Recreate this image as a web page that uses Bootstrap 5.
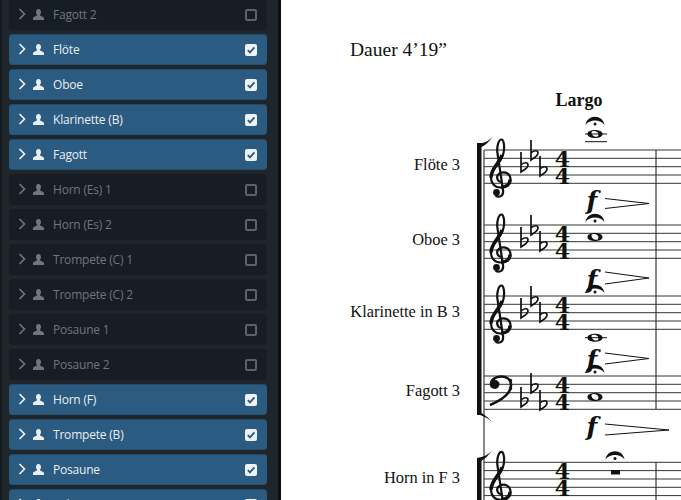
<!DOCTYPE html>
<html lang="en">
<head>
    <title>Score parts</title>
    <meta name="viewport" content="width=device-width, initial-scale=1">
    <link href="https://cdn.jsdelivr.net/npm/bootstrap@5.3.0/dist/css/bootstrap.min.css" rel="stylesheet">
    <script src="https://cdn.jsdelivr.net/npm/bootstrap@5.3.0/dist/js/bootstrap.bundle.min.js"></script>
    <style>
        html, body { height: 500px; overflow: hidden; background: #fff; }
        .part-panel {
            width: 281px;
            height: 500px;
            padding: 0 11px 0 7px;
            background: #1f262b;
            border-left: 2px solid #14181b;
            border-right: 3px solid #0c0e10;
            overflow: hidden;
        }
        .part-list { margin-top: -1px; gap: 4px; }
        .part-row {
            height: 31px;
            flex: none;
            padding: 0 10px 0 9px;
            border-radius: 4px;
            background: #171d24;
            color: #71767a;
            font: 12px/1 "Open Sans", sans-serif;
        }
        .part-row.is-on {
            background: #2b5b80;
            color: #e9eef2;
            box-shadow: 0 1px 0 #214a69 inset, 0 -1px 0 #25506f inset;
        }
        .part-chev { width: 8px; height: 12px; margin-right: 7px; margin-top: -1px; stroke: currentColor; fill: none; stroke-width: 1.7; }
        .part-user { width: 11px; height: 11px; margin-right: 9px; fill: currentColor; }
        .part-name { flex: 1; letter-spacing: -.2px; padding-top: 1px; }
        .part-box {
            width: 12px;
            height: 12px;
            border-radius: 2px;
            border: 2px solid #5c6269;
        }
        .is-on .part-box { background: #eef2f6; border-color: #eef2f6; }
        .part-box svg { display: none; width: 10px; height: 10px; margin: -1px; fill: none; stroke: #2b5b80; stroke-width: 1.8; }
        .is-on .part-box svg { display: block; }
        .score-sheet { width: 400px; height: 500px; flex: none; }
        .score-sheet text { font-family: "Liberation Serif", serif; fill: #111; }
        .score-sheet .score-name { font-size: 16.4px; text-anchor: end; }
        .score-staff line { stroke: #333; stroke-width: 1; }
        .score-sheet .score-time { font-family: "DejaVu Serif", serif; font-size: 22px; font-weight: 700; text-anchor: middle; }
        .score-sheet .score-dyn { font-family: "DejaVu Serif", serif; font-size: 25px; font-weight: 700; font-style: italic; text-anchor: middle; }
        .score-hair { fill: none; stroke: #111; stroke-width: 1; }
    </style>
</head>
<body class="d-flex">

    <svg width="0" height="0" class="position-absolute">
        <defs>
            <symbol id="chev" viewBox="0 0 8 12"><path d="M1.5 1 L6.5 6 L1.5 11"/></symbol>
            <symbol id="user" viewBox="0 0 11 11"><path d="M5.5 0C7.3 0 8 1.5 8 3C8 4.5 7.2 5.3 6.9 6C7 7 10.5 7.5 11 9V11H0V9C.5 7.5 4 7 4.1 6C3.8 5.3 3 4.5 3 3C3 1.5 3.7 0 5.5 0Z"/></symbol>
            <symbol id="tick" viewBox="0 0 10 10"><path d="M1.8 5.2 L4 7.4 L8.4 2.4"/></symbol>
        </defs>
    </svg>

    <div class="part-panel flex-shrink-0">
        <div class="part-list d-flex flex-column">
            <div class="part-row d-flex align-items-center"><svg class="part-chev"><use href="#chev"/></svg><svg class="part-user"><use href="#user"/></svg><span class="part-name">Fagott 2</span><span class="part-box"><svg><use href="#tick"/></svg></span></div>
            <div class="part-row is-on d-flex align-items-center"><svg class="part-chev"><use href="#chev"/></svg><svg class="part-user"><use href="#user"/></svg><span class="part-name">Flöte</span><span class="part-box"><svg><use href="#tick"/></svg></span></div>
            <div class="part-row is-on d-flex align-items-center"><svg class="part-chev"><use href="#chev"/></svg><svg class="part-user"><use href="#user"/></svg><span class="part-name">Oboe</span><span class="part-box"><svg><use href="#tick"/></svg></span></div>
            <div class="part-row is-on d-flex align-items-center"><svg class="part-chev"><use href="#chev"/></svg><svg class="part-user"><use href="#user"/></svg><span class="part-name">Klarinette (B)</span><span class="part-box"><svg><use href="#tick"/></svg></span></div>
            <div class="part-row is-on d-flex align-items-center"><svg class="part-chev"><use href="#chev"/></svg><svg class="part-user"><use href="#user"/></svg><span class="part-name">Fagott</span><span class="part-box"><svg><use href="#tick"/></svg></span></div>
            <div class="part-row d-flex align-items-center"><svg class="part-chev"><use href="#chev"/></svg><svg class="part-user"><use href="#user"/></svg><span class="part-name">Horn (Es) 1</span><span class="part-box"><svg><use href="#tick"/></svg></span></div>
            <div class="part-row d-flex align-items-center"><svg class="part-chev"><use href="#chev"/></svg><svg class="part-user"><use href="#user"/></svg><span class="part-name">Horn (Es) 2</span><span class="part-box"><svg><use href="#tick"/></svg></span></div>
            <div class="part-row d-flex align-items-center"><svg class="part-chev"><use href="#chev"/></svg><svg class="part-user"><use href="#user"/></svg><span class="part-name">Trompete (C) 1</span><span class="part-box"><svg><use href="#tick"/></svg></span></div>
            <div class="part-row d-flex align-items-center"><svg class="part-chev"><use href="#chev"/></svg><svg class="part-user"><use href="#user"/></svg><span class="part-name">Trompete (C) 2</span><span class="part-box"><svg><use href="#tick"/></svg></span></div>
            <div class="part-row d-flex align-items-center"><svg class="part-chev"><use href="#chev"/></svg><svg class="part-user"><use href="#user"/></svg><span class="part-name">Posaune 1</span><span class="part-box"><svg><use href="#tick"/></svg></span></div>
            <div class="part-row d-flex align-items-center"><svg class="part-chev"><use href="#chev"/></svg><svg class="part-user"><use href="#user"/></svg><span class="part-name">Posaune 2</span><span class="part-box"><svg><use href="#tick"/></svg></span></div>
            <div class="part-row is-on d-flex align-items-center"><svg class="part-chev"><use href="#chev"/></svg><svg class="part-user"><use href="#user"/></svg><span class="part-name">Horn (F)</span><span class="part-box"><svg><use href="#tick"/></svg></span></div>
            <div class="part-row is-on d-flex align-items-center"><svg class="part-chev"><use href="#chev"/></svg><svg class="part-user"><use href="#user"/></svg><span class="part-name">Trompete (B)</span><span class="part-box"><svg><use href="#tick"/></svg></span></div>
            <div class="part-row is-on d-flex align-items-center"><svg class="part-chev"><use href="#chev"/></svg><svg class="part-user"><use href="#user"/></svg><span class="part-name">Posaune</span><span class="part-box"><svg><use href="#tick"/></svg></span></div>
            <div class="part-row is-on d-flex align-items-center"><svg class="part-chev"><use href="#chev"/></svg><svg class="part-user"><use href="#user"/></svg><span class="part-name">Tuba</span><span class="part-box"><svg><use href="#tick"/></svg></span></div>
        </div>
    </div>

    <!-- score page: coordinates in the viewBox are window pixels -->
    <svg class="score-sheet" viewBox="281 0 400 500">
        <defs>
            <g id="gclef">
                <path d="M502 182C497 182 495.500 176 499.500 173.500C505 170.500 510.500 174 510.500 179.500C510.500 185 505.500 187.500 500.500 187.500C494 187.500 491 182.500 491 177.500C491 168 501 163 503.500 153C505 146 503.500 139.500 501.500 139.500C498.500 139.500 496.500 147 497.500 153.500L503 190C504 196.500 498.500 198 495.500 195.500" fill="none" stroke="#111" stroke-width="2.200"/>
                <path d="M491 177.500C491 168 500 163 502 155" fill="none" stroke="#111" stroke-width="3.600"/>
                <path d="M510 179.500C510 185 505.500 187 501 187" fill="none" stroke="#111" stroke-width="3.400"/>
                <circle cx="496.500" cy="192.500" r="3.400" fill="#111"/>
            </g>
            <g id="flat">
                <path d="M0 -20V0C3 -2 7 -4 7 -7C7 -10 3 -10 0 -7" fill="none" stroke="#111" stroke-width="1.700"/>
            </g>
            <g id="whole">
                <path fill-rule="evenodd" fill="#111" d="M-7.500 0C-7.500 -3 -3.500 -4 0 -4C3.500 -4 7.500 -3 7.500 0C7.500 3 3.500 4 0 4C-3.500 4 -7.500 3 -7.500 0ZM-3.500 -1.500C-3.500 1 -1 3 1.500 2.800C3.200 2.600 3.800 1 3.300 -.5C2.800 -2.500 .5 -3.300 -1.500 -3C-3 -2.800 -3.500 -2.500 -3.500 -1.500Z"/>
            </g>
            <g id="fermata">
                <path d="M-9.500 0C-8 -11 8 -11 9.500 0C6 -6 -6 -6 -9.500 0Z" fill="#111"/>
                <circle cx="0" cy="-1" r="1.500" fill="#111"/>
            </g>
            <g id="staff" class="score-staff">
                <line x1="484" x2="681" y1="0" y2="0"/>
                <line x1="484" x2="681" y1="8.300" y2="8.300"/>
                <line x1="484" x2="681" y1="16.700" y2="16.700"/>
                <line x1="484" x2="681" y1="25" y2="25"/>
                <line x1="484" x2="681" y1="33.300" y2="33.300"/>
            </g>
            <g id="keysig">
                <use href="#flat" x="521" y="22"/>
                <use href="#flat" x="531" y="10"/>
                <use href="#flat" x="540" y="26"/>
            </g>
        </defs>

        <text x="350" y="56" font-size="19.500">Dauer 4’19”</text>
        <text x="579" y="106" font-size="18" font-weight="700" text-anchor="middle">Largo</text>

        <text class="score-name" x="460" y="170">Flöte 3</text>
        <text class="score-name" x="460" y="245">Oboe 3</text>
        <text class="score-name" x="460" y="317">Klarinette in B 3</text>
        <text class="score-name" x="460" y="396">Fagott 3</text>
        <text class="score-name" x="460" y="483">Horn in F 3</text>

        <!-- brackets -->
        <line x1="484" x2="484" y1="150" y2="500" stroke="#111"/>
        <path d="M477 143H481.500V415H477Z" fill="#111"/>
        <path d="M477 144C483 143 489 142 492.500 136.500C490 141 485 146 481 147H477Z" fill="#111"/>
        <path d="M477 414C483 416 489 418 492.500 423C490 419 485 415 481 413H477Z" fill="#111"/>
        <path d="M477 458H481.500V500H477Z" fill="#111"/>
        <path d="M477 458C483 457 489 455 492.500 449.500C490 454 485 459 481 461H477Z" fill="#111"/>
        <line x1="656" x2="656" y1="150" y2="409.300" stroke="#111"/>
        <line x1="656" x2="656" y1="462.300" y2="500" stroke="#111"/>

        <!-- staff 1 -->
        <use href="#staff" y="150"/>
        <use href="#gclef"/>
        <use href="#keysig" y="150"/>
        <text class="score-time" x="562.500" y="167">4</text>
        <text class="score-time" x="562.500" y="183.500">4</text>
        <use href="#fermata" x="595" y="125"/>
        <use href="#whole" x="595" y="134"/>
        <line x1="585" x2="607" y1="134" y2="134" stroke="#111"/>
        <line x1="585" x2="607" y1="141.700" y2="141.700" stroke="#111"/>

        <!-- staff 2 -->
        <text class="score-dyn" x="592" y="209">f</text>
        <path class="score-hair" d="M605 198.500L649 203.500L605 208.500"/>
        <use href="#staff" y="225"/>
        <use href="#gclef" y="75"/>
        <use href="#keysig" y="225"/>
        <text class="score-time" x="562.500" y="242">4</text>
        <text class="score-time" x="562.500" y="258.500">4</text>
        <use href="#fermata" x="595" y="222"/>
        <use href="#whole" x="595" y="237"/>

        <!-- staff 3 -->
        <text class="score-dyn" x="592" y="288">f</text>
        <path class="score-hair" d="M605 272L649 278L605 284"/>
        <use href="#staff" y="296"/>
        <use href="#gclef" y="146"/>
        <use href="#keysig" y="296"/>
        <text class="score-time" x="562.500" y="313">4</text>
        <text class="score-time" x="562.500" y="329.500">4</text>
        <use href="#fermata" x="595" y="293"/>
        <use href="#whole" x="595" y="337.700"/>
        <line x1="585" x2="607" y1="337.700" y2="337.700" stroke="#111"/>

        <!-- staff 4 -->
        <text class="score-dyn" x="592" y="368">f</text>
        <path class="score-hair" d="M605 353L649 358.500L605 364"/>
        <use href="#staff" y="376"/>
        <path d="M490 405C502 400 511 393 511 385C511 379 506 376.500 501 376.500C495 376.500 491 380 491 384C491 388 497 389 498 385C499 382 495 380 492 382" fill="none" stroke="#111" stroke-width="2.600"/>
        <circle cx="494" cy="384" r="3.400" fill="#111"/>
        <circle cx="510.500" cy="380.500" r="1.700" fill="#111"/>
        <circle cx="510.500" cy="388.500" r="1.700" fill="#111"/>
        <use href="#flat" x="521" y="407"/>
        <use href="#flat" x="531" y="393"/>
        <use href="#flat" x="540" y="410"/>
        <text class="score-time" x="562.500" y="393">4</text>
        <text class="score-time" x="562.500" y="409.500">4</text>
        <use href="#fermata" x="595" y="373"/>
        <use href="#whole" x="595" y="397"/>

        <!-- between the groups -->
        <text class="score-dyn" x="592" y="435">f</text>
        <path class="score-hair" d="M605 424L669 430L605 435"/>

        <!-- staff 5 -->
        <use href="#staff" y="462.300"/>
        <use href="#gclef" y="312.300"/>
        <text class="score-time" x="562.500" y="479.300">4</text>
        <text class="score-time" x="562.500" y="495.800">4</text>
        <use href="#fermata" x="615" y="459.500"/>
        <rect x="611" y="470" width="9" height="4.500" fill="#111"/>
    </svg>

</body>
</html>
